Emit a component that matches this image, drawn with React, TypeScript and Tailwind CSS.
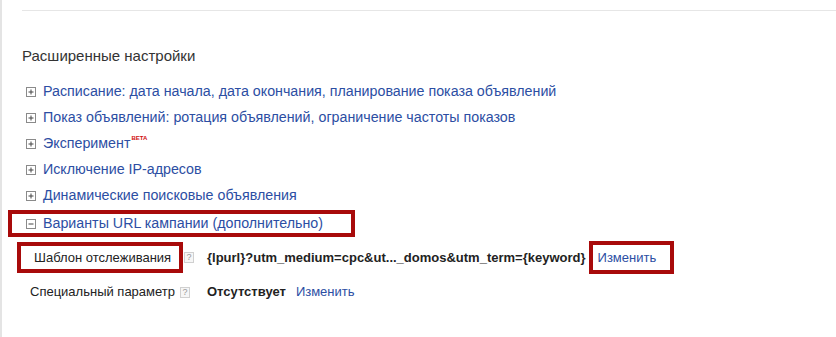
import React from "react";

const LINK = "text-[#2c4ea3]";

const ToggleIcon = ({ open = false }: { open?: boolean }) => (
	<svg width="10" height="10" viewBox="0 0 10 10" className="shrink-0">
		<rect x="0.5" y="0.5" width="9" height="9" fill="#fff" stroke="#8a8a8a" />
		<path d="M2.5 5h5" stroke="#444" strokeWidth="1" />
		{!open && <path d="M5 2.5v5" stroke="#444" strokeWidth="1" />}
	</svg>
);

const HelpIcon = ({ className = "" }: { className?: string }) => (
	<span
		className={`inline-flex shrink-0 items-center justify-center w-[10px] h-[11px] border border-[#d0d0d0] bg-[#f6f6f6] text-[9px] leading-none text-[#999] ${className}`}
	>
		?
	</span>
);

const sections = [
	{ label: "Расписание: дата начала, дата окончания, планирование показа объявлений" },
	{ label: "Показ объявлений: ротация объявлений, ограничение частоты показов" },
	{ label: "Эксперимент", beta: true },
	{ label: "Исключение IP-адресов" },
	{ label: "Динамические поисковые объявления" },
];

export default function App() {
	return (
		<div className="w-[836px] h-[337px] bg-white border-l-2 border-[#e4e4e4] font-['Liberation_Sans',Arial,sans-serif] text-[14.25px] overflow-hidden">
			<div className="ml-[20px] mt-[10px] border-t border-[#e6e6e6]" />
			<div className="ml-[20px] mt-[35px] leading-[20px] text-[15px] text-[#333]">
				Расширенные настройки
			</div>

			<div className="mt-[13px]">
				{sections.map((s) => (
					<div key={s.label} className="flex items-center h-[26px] pl-[24px] gap-[7px]">
						<ToggleIcon />
						<span className={`${LINK} whitespace-nowrap`}>
							{s.label}
							{s.beta && (
								<span className="inline-block align-top mt-[2px] ml-[1px] text-[6px] leading-none font-bold text-[#d01010]">
									BETA
								</span>
							)}
						</span>
					</div>
				))}
				<div className="ml-[6px] mt-[1px] flex items-center w-[347px] h-[27px] border-4 border-[#a80a0a] pl-[14px] gap-[7px]">
					<ToggleIcon open />
					<span className={`${LINK} whitespace-nowrap`}>Варианты URL кампании (дополнительно)</span>
				</div>
			</div>

			<div className="mt-[4px] ml-[15px] flex items-center text-[13px] whitespace-nowrap">
				<div className="w-[166px] h-[31px] border-4 border-[#a80a0a] pl-[13px] flex items-center text-[#222]">
					Шаблон отслеживания
				</div>
				<HelpIcon className="ml-[1px]" />
				<span className="ml-[13px] font-bold text-[#222]">
					{"{lpurl}?utm_medium=cpc&ut..._domos&utm_term={keyword}"}
				</span>
				<div className="ml-[3px] w-[85px] h-[33px] border-4 border-[#a80a0a] pl-[5px] flex items-center">
					<span className={LINK}>Изменить</span>
				</div>
			</div>

			<div className="mt-[1px] ml-[28px] flex items-center h-[34px] text-[13px] whitespace-nowrap">
				<span className="text-[#222]">Специальный параметр</span>
				<HelpIcon className="ml-[5px]" />
				<span className="ml-[17px] font-bold text-[#222]">Отсутствует</span>
				<span className={`ml-[10px] ${LINK}`}>Изменить</span>
			</div>
		</div>
	);
}
